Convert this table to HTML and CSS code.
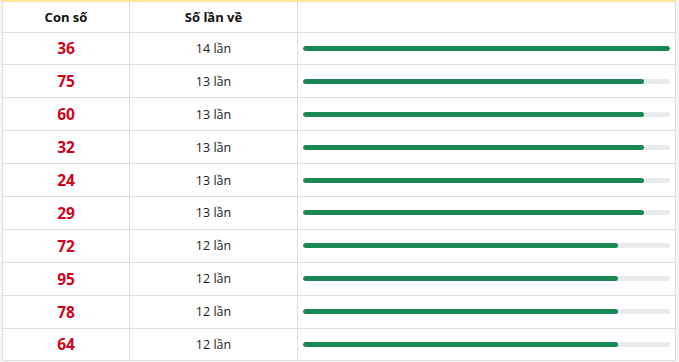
FILE: index.html
```html
<!DOCTYPE html>
<html lang="vi">
<head>
<meta charset="utf-8">
<link rel="stylesheet" href="styles.css">
</head>
<body>
<div class="wrap">
<table class="stats">
<colgroup><col class="c1"><col class="c2"><col class="c3"></colgroup>
<thead>
<tr><th>Con số</th><th>Số lần về</th><th></th></tr>
</thead>
<tbody>
<tr><td class="num">36</td><td class="cnt">14 lần</td><td class="barcell"><div class="track"><div class="fill" style="width:100%"></div></div></td></tr>
<tr><td class="num">75</td><td class="cnt">13 lần</td><td class="barcell"><div class="track"><div class="fill" style="width:92.857%"></div></div></td></tr>
<tr><td class="num">60</td><td class="cnt">13 lần</td><td class="barcell"><div class="track"><div class="fill" style="width:92.857%"></div></div></td></tr>
<tr><td class="num">32</td><td class="cnt">13 lần</td><td class="barcell"><div class="track"><div class="fill" style="width:92.857%"></div></div></td></tr>
<tr><td class="num">24</td><td class="cnt">13 lần</td><td class="barcell"><div class="track"><div class="fill" style="width:92.857%"></div></div></td></tr>
<tr><td class="num">29</td><td class="cnt">13 lần</td><td class="barcell"><div class="track"><div class="fill" style="width:92.857%"></div></div></td></tr>
<tr><td class="num">72</td><td class="cnt">12 lần</td><td class="barcell"><div class="track"><div class="fill" style="width:85.714%"></div></div></td></tr>
<tr><td class="num">95</td><td class="cnt">12 lần</td><td class="barcell"><div class="track"><div class="fill" style="width:85.714%"></div></div></td></tr>
<tr><td class="num">78</td><td class="cnt">12 lần</td><td class="barcell"><div class="track"><div class="fill" style="width:85.714%"></div></div></td></tr>
<tr><td class="num">64</td><td class="cnt">12 lần</td><td class="barcell"><div class="track"><div class="fill" style="width:85.714%"></div></div></td></tr>
</tbody>
</table>
</div>
</body>
</html>
```
FILE: styles.css
```css
html, body {
  margin: 0;
  padding: 0;
  background: #f6f6f6;
}
body {
  font-family: "Open Sans", "Noto Sans", sans-serif;
  color: #212529;
}
.wrap {
  width: 674px;
  margin-left: 2px;
  border-top: 2px solid #fde59a;
  background: #fff;
}
.stats {
  width: 674px;
  border-collapse: collapse;
  table-layout: fixed;
}
.c1 { width: 127px; }
.c2 { width: 168px; }
.stats th, .stats td {
  border: 1px solid #dedede;
  text-align: center;
  padding: 0;
}
.stats thead tr { height: 30px; }
.stats tbody tr { height: 32.9px; }
.stats thead th { border-top: none; }
.stats th {
  font-size: 13px;
  font-weight: 700;
  color: #111;
}
.num {
  font-size: 15.5px;
  font-weight: 700;
  color: #d0021b;
}
.cnt {
  font-size: 12.5px;
  color: #1a1a1a;
}
.barcell {
  padding: 0 5px 0 5px !important;
}
.track {
  height: 5px;
  background: #e9ecef;
  border-radius: 3px;
  overflow: hidden;
}
.fill {
  height: 100%;
  background: #198754;
  border-radius: 3px;
}
```
